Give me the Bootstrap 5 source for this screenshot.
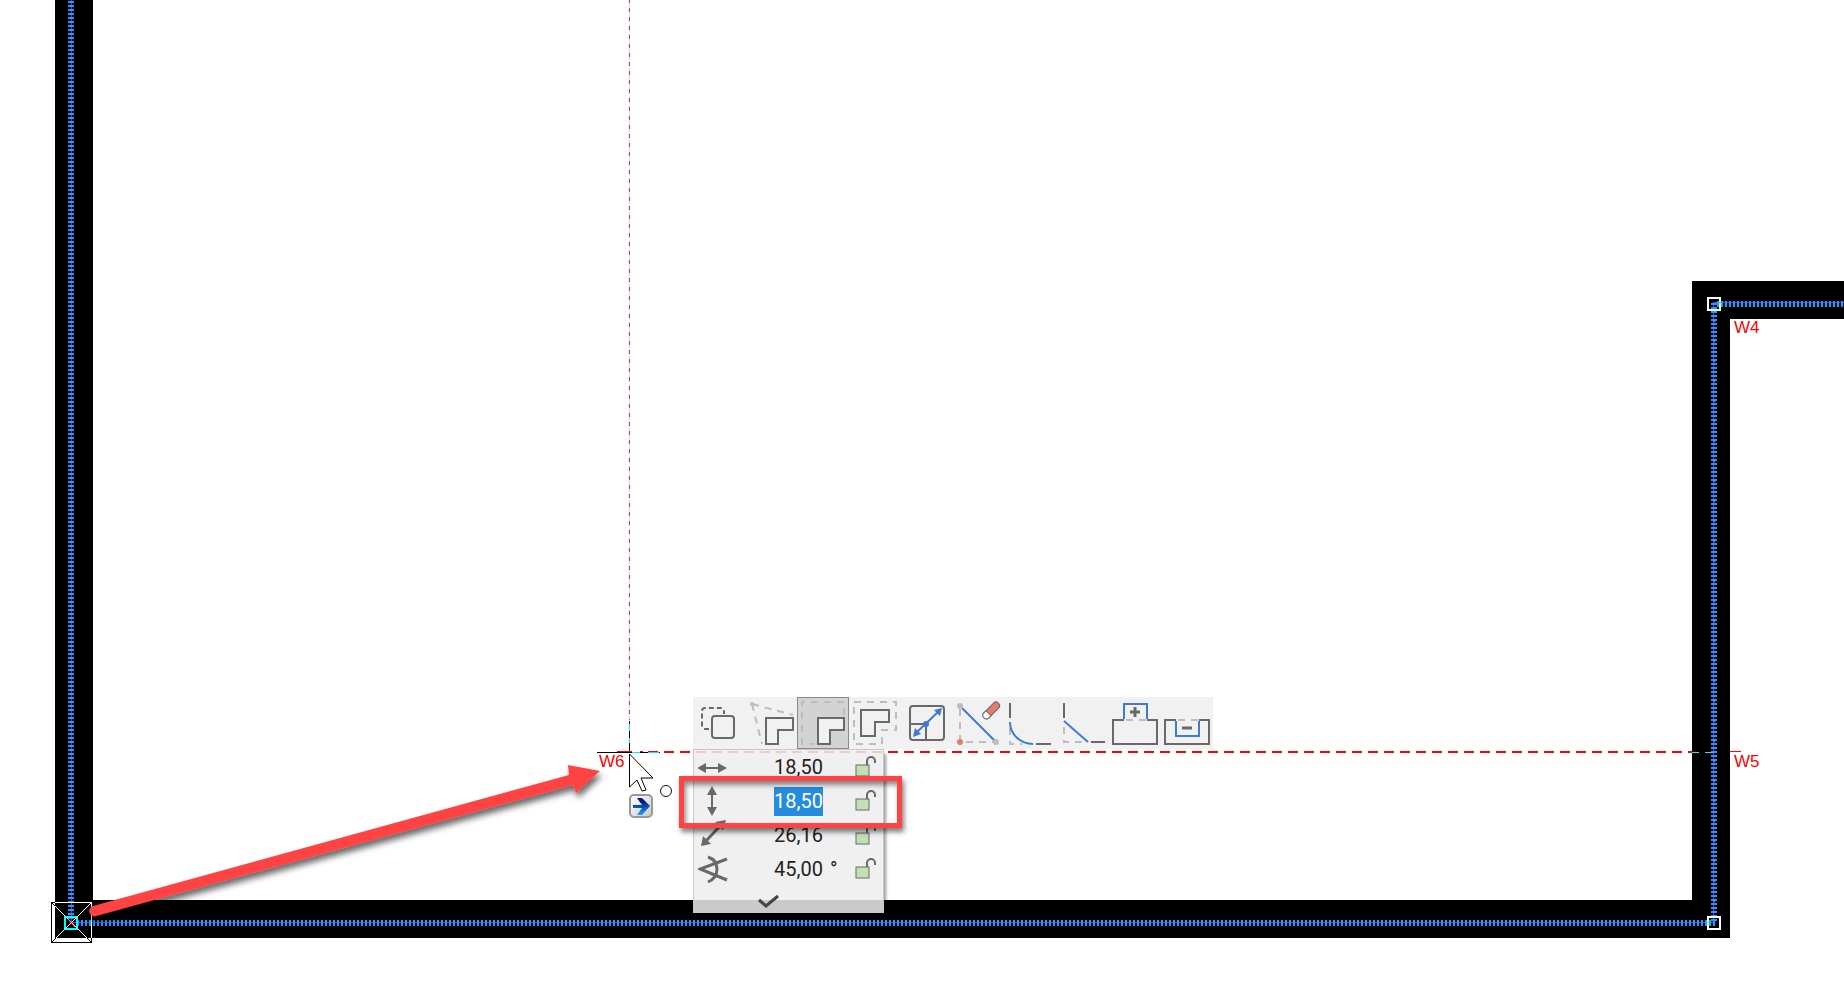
<!DOCTYPE html>
<html lang="en">
<head>
<meta charset="utf-8">
<meta name="viewport" content="width=device-width, initial-scale=1">
<title>Floor plan editor</title>
<link href="https://cdn.jsdelivr.net/npm/bootstrap@5.3.0/dist/css/bootstrap.min.css" rel="stylesheet">
<style>
  body { background: #fff; }
  .plan-label { font: 17px/20px "Liberation Sans", Arial, sans-serif; fill: #f00; }
  .hatch { stroke: #00a8ff; stroke-width: 6; stroke-dasharray: 2 2; }
  .axis { stroke: #d000ff; stroke-width: 1; }
  .crisp { shape-rendering: crispEdges; }

  /* floating palette: toolbar with the coordinate panel under it */
  .palette { left: 693px; top: 697px; }
  .tool-strip { background: #f1f1f1; }
  .tool { width: 52px; height: 52px; background: none; border: 1px solid transparent; }
  .tool.active { background: #d3d3d3; border-color: #8a8a8a; }
  .tool svg { display: block; margin: -1px; }
  .tool svg, .coord-row svg, .confirm svg { fill: none; stroke: #696969; stroke-width: 2; }
  .tool .hint { stroke: #bdbdbd; stroke-dasharray: 7 6; }
  .tool .edit { stroke: #3f7bd0; }

  .coords { width: 191px; background: rgba(237,237,237,.85); border: 1px solid #c8c8c8; box-shadow: 3px 4px 3px -1px rgba(0,0,0,.4); }
  .coord-row { height: 34px; }
  .coord-icon { width: 32px; height: 34px; }
  .coord-input { width: 49px; height: 29px; font: 20px/29px Roboto, "Open Sans", sans-serif; color: #222; background: transparent; text-align: right; }
  .coord-input.picked { background: #258bdc; color: #fff; }
  .unit { width: 32px; padding-left: 7px; font: 20px/29px Roboto, "Open Sans", sans-serif; color: #222; }
  .lock { width: 24px; height: 34px; }
  .confirm { height: 26px; }
  .callout { left: -14px; top: 79px; width: 223px; height: 52px; border: 5px solid #ff4343; pointer-events: none; box-shadow: 2px 4px 5px rgba(0,0,0,.5), inset 2px 4px 5px rgba(0,0,0,.45); }
</style>
</head>
<body>
<main class="position-relative vh-100 overflow-hidden">
  <svg class="d-block w-100 h-100" role="img" aria-label="Floor plan">
    <defs>
      <filter id="soft" x="-10%" y="-20%" width="120%" height="150%"><feDropShadow dx="2" dy="5" stdDeviation="3" flood-opacity=".6"/></filter>
      <linearGradient id="chip" x1="0" y1="0" x2="1" y2="1"><stop offset="0" stop-color="#fff"/><stop offset="1" stop-color="#c9c9c9"/></linearGradient>
      <linearGradient id="blue" x1="0" y1="0" x2="0" y2="1"><stop offset=".2" stop-color="#001a80"/><stop offset="1" stop-color="#1fa0ff"/></linearGradient>
    </defs>
    <!-- walls -->
    <g class="crisp">
      <rect x="55" y="0" width="38" height="938"/>
      <rect x="55" y="900" width="1675" height="38"/>
      <rect x="1692" y="281" width="38" height="657"/>
      <rect x="1692" y="281" width="100%" height="38"/>
      <path class="axis" d="M71.500 0V922M71 922.500H1714M1713.500 302V922"/>
      <line class="axis" x1="1713" y1="302.500" x2="100%" y2="302.500"/>
      <line class="hatch" x1="71" y1="-3" x2="71" y2="920"/>
      <line class="hatch" x1="77" y1="923" x2="1716" y2="923"/>
      <line class="hatch" x1="1714" y1="303" x2="1714" y2="922"/>
      <line class="hatch" x1="1717" y1="304" x2="100%" y2="304"/>
      <path d="M1714.500 311V918" stroke="#00e5ff" stroke-dasharray="1 9"/>
    </g>
    <!-- guide lines -->
    <g class="crisp" fill="none">
      <path d="M629.500 0V720" stroke="#fbd6d6"/>
      <path d="M629.500 -1V720" stroke="#e03030" stroke-dasharray="4 5"/>
      <path d="M648 752H1692" stroke="#f00" stroke-width="2" stroke-dasharray="10 6"/>
      <path d="M597 752.500H660M629.500 721V752" stroke="#000"/>
      <path d="M617 751.500H632M640 751.500H643M648 751.500H658M1730 751.500H1741" stroke="#f00"/>
      <path d="M632 752.500H640M648 752.500H659M629.500 724V731M629.500 738V743M1692 752.500H1699M1705 752.500H1713" stroke="#00f0ff"/>
    </g>
    <!-- corner handles -->
    <g fill="none">
      <g class="crisp">
        <rect x="51.500" y="902.500" width="40" height="40" stroke="#000"/>
        <path d="M55 902.500H92M91.500 902V938" stroke="#fff"/>
        <rect x="65" y="917" width="12" height="12" stroke="#0ff" stroke-width="2"/>
      </g>
      <path d="M51 902L55 906M92 943L87 938M51 943L56 938" stroke="#000"/>
      <path d="M55 906L87 938M92 902L56 938" stroke="#fff"/>
      <path d="M68 919L75 927" stroke="#ff8a20"/>
      <g class="crisp" stroke="#fff" stroke-width="2"><rect x="1708" y="298" width="12" height="12"/><rect x="1708" y="917" width="12" height="12"/></g>
      <path d="M1718 302.500H1721M1708 922.500H1711" stroke="#0f0"/>
    </g>
    <text class="plan-label" x="599" y="767">W6</text>
    <text class="plan-label" x="1734" y="333">W4</text>
    <text class="plan-label" x="1734" y="767">W5</text>
    <!-- pointing arrow -->
    <path d="M93 906L569 775L568 765L600 771L576 793L573 785L96 916A5 5 0 0 1 93 906Z" fill="#ff4343" filter="url(#soft)"/>
    <!-- cursor and its badge -->
    <path d="M629.500 754V787L637 780L642 791L646 790L641 778H653Z" fill="#fff" stroke="#000"/>
    <circle cx="666" cy="791" r="5.500" fill="#fff" stroke="#111"/>
    <rect x="630" y="795" width="22" height="22" rx="4" fill="url(#chip)" stroke="#999" stroke-width="2"/>
    <path d="M633 805H642L637 798H642L650 806L642 815H637L642 808H633Z" fill="url(#blue)"/>
  </svg>

  <section class="palette position-absolute" aria-label="Pet palette">
    <div class="tool-strip d-flex" role="toolbar" aria-label="Polygon tools">
      <button type="button" class="tool p-0" aria-label="Move copy"><svg width="52" height="52"><path d="M16 32H12a3 3 0 0 1-3-3V14a3 3 0 0 1 3-3H28a3 3 0 0 1 3 3V17" stroke-dasharray="5 3"/><rect x="19" y="19" width="22" height="22" rx="3"/></svg></button>
      <button type="button" class="tool p-0" aria-label="Move node"><svg width="52" height="52"><path class="hint" d="M7 7L48 18M7 7L17 47"/><circle cx="7" cy="7" r="2" fill="#bdbdbd" stroke="none"/><path d="M21 21H48V33H33V47H21Z"/></svg></button>
      <button type="button" class="tool p-0 active" aria-label="Offset edge" aria-pressed="true"><svg width="52" height="52"><path class="hint" d="M47 18V5H5V47H17"/><path d="M21 21H47V33H33V47H21Z" fill="#f1f1f1"/></svg></button>
      <button type="button" class="tool p-0" aria-label="Offset all edges"><svg width="52" height="52"><path class="hint" d="M5 5H47V33H33V47H5Z"/><path d="M12 13H40V25H26V39H12Z"/></svg></button>
      <button type="button" class="tool p-0" aria-label="Resize"><svg width="52" height="52"><rect x="9" y="9" width="34" height="34" rx="3"/><path d="M9 27H25V43"/><path class="edit" d="M14 37L38 14"/><g fill="#3f7bd0" stroke="none"><path d="M41 11L39 19L33 13ZM12 40L14 31L20 37Z"/><circle cx="25" cy="27" r="3"/></g></svg></button>
      <button type="button" class="tool p-0" aria-label="Remove node"><svg width="52" height="52"><path class="hint" d="M7 12V45H43"/><path class="edit" d="M9 11L43 45"/><g stroke="none"><circle cx="7" cy="9" r="3" fill="#bdbdbd"/><circle cx="43" cy="45" r="3" fill="#bdbdbd"/><circle cx="7" cy="45" r="3" fill="#e67b70"/></g><g transform="rotate(-45 38 13)" stroke-width="1"><rect x="28" y="10" width="20" height="7" rx="3" fill="#e67b70"/><path d="M34 10H31a3 3 0 0 0 0 7H34Z" fill="#fff"/></g></svg></button>
      <button type="button" class="tool p-0" aria-label="Fillet"><svg width="52" height="52"><path class="hint" d="M5 31V47H17"/><path d="M5 6V21M31 47H46"/><path class="edit" d="M5 25C5 37 15 47 28 47"/></svg></button>
      <button type="button" class="tool p-0" aria-label="Chamfer"><svg width="52" height="52"><path class="hint" d="M7 30V45H27"/><path d="M7 6V21M34 45H48"/><path class="edit" d="M7 24L31 45"/></svg></button>
      <button type="button" class="tool p-0" aria-label="Add to polygon"><svg width="52" height="52"><path class="hint" d="M17 23H38"/><path d="M15 23H4V47H48V23H38"/><path class="edit" d="M15 22V7H38V22"/><path d="M21 15H31M26 10V20" stroke-width="3"/></svg></button>
      <button type="button" class="tool p-0" aria-label="Subtract from polygon"><svg width="52" height="52"><path class="hint" d="M17 23H38"/><path d="M15 23H4V47H48V23H38"/><path class="edit" d="M15 24V39H38V24"/><path d="M21 31H31" stroke-width="3"/></svg></button>
    </div>

    <form class="coords position-relative">
      <div class="coord-row d-flex align-items-center">
        <label for="dx" class="coord-icon ms-1 me-auto"><svg class="d-block" width="32" height="34" role="img" aria-label="Horizontal"><path d="M5 18H25"/><path d="M-1 18L8 13V23ZM29 18L20 13V23Z" fill="#696969" stroke="none"/></svg></label>
        <input id="dx" class="coord-input border-0 p-0" value="18,50"><span class="unit"></span>
        <button type="button" class="lock border-0 bg-transparent p-0 me-1" aria-label="Lock horizontal"><svg class="d-block" width="24" height="34"><path d="M12 15V11a4 4 0 0 1 8 0V13"/><rect x="1" y="15" width="13" height="11" fill="#c2e0b4" stroke-width="1"/></svg></button>
      </div>
      <div class="coord-row d-flex align-items-center">
        <label for="dy" class="coord-icon ms-1 me-auto"><svg class="d-block" width="32" height="34" role="img" aria-label="Vertical"><path d="M14 8V26"/><path d="M14 2L9 11H19ZM14 32L9 23H19Z" fill="#696969" stroke="none"/></svg></label>
        <input id="dy" class="coord-input picked border-0 p-0" value="18,50"><span class="unit"></span>
        <button type="button" class="lock border-0 bg-transparent p-0 me-1" aria-label="Lock vertical"><svg class="d-block" width="24" height="34"><path d="M12 15V11a4 4 0 0 1 8 0V13"/><rect x="1" y="15" width="13" height="11" fill="#c2e0b4" stroke-width="1"/></svg></button>
      </div>
      <div class="coord-row d-flex align-items-center">
        <label for="dist" class="coord-icon ms-1 me-auto"><svg class="d-block" width="32" height="34" role="img" aria-label="Distance"><path d="M7 24L22 8" stroke-width="3"/><path d="M3 28L5 18L13 26ZM28 2L25 12L17 4Z" fill="#696969" stroke="none"/></svg></label>
        <input id="dist" class="coord-input border-0 p-0" value="26,16"><span class="unit"></span>
        <button type="button" class="lock border-0 bg-transparent p-0 me-1" aria-label="Lock distance"><svg class="d-block" width="24" height="34"><path d="M12 15V11a4 4 0 0 1 8 0V13"/><rect x="1" y="15" width="13" height="11" fill="#c2e0b4" stroke-width="1"/></svg></button>
      </div>
      <div class="coord-row d-flex align-items-center">
        <label for="ang" class="coord-icon ms-1 me-auto"><svg class="d-block" width="32" height="34" role="img" aria-label="Angle"><path d="M29 7L2 17L29 28M10 5Q19 8 19 17T10 30" stroke-width="3"/></svg></label>
        <input id="ang" class="coord-input border-0 p-0" value="45,00"><span class="unit">°</span>
        <button type="button" class="lock border-0 bg-transparent p-0 me-1" aria-label="Lock angle"><svg class="d-block" width="24" height="34"><path d="M12 15V11a4 4 0 0 1 8 0V13"/><rect x="1" y="15" width="13" height="11" fill="#c2e0b4" stroke-width="1"/></svg></button>
      </div>
      <button type="button" class="confirm d-flex justify-content-center align-items-center w-100 border-0 bg-transparent pt-1 pb-0 ps-0 pe-5" aria-label="Confirm"><svg class="ms-2" width="24" height="16"><path d="M2 7L9 13L21 3" stroke="#444" stroke-width="3"/></svg></button>
    </form>
    <div class="callout position-absolute"></div>
  </section>
</main>
<script src="https://cdn.jsdelivr.net/npm/bootstrap@5.3.0/dist/js/bootstrap.bundle.min.js"></script>
</body>
</html>
